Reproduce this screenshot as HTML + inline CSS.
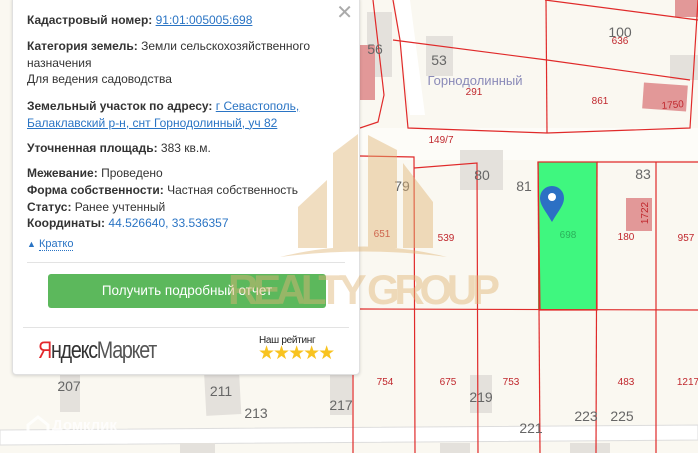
<!DOCTYPE html>
<html><head><meta charset="utf-8"><style>
*{margin:0;padding:0;box-sizing:border-box}
body{width:698px;height:453px;overflow:hidden;position:relative;background:#f8f6ef;font-family:"Liberation Sans","DejaVu Sans",sans-serif}
svg.map{position:absolute;left:0;top:0}
.pop{position:absolute;left:12px;top:-4px;width:348px;height:379px;background:#fff;border:1px solid #e0e0e0;border-radius:4px;box-shadow:0 1px 3px rgba(0,0,0,.15);font-size:12px;color:#333}
.pop p{position:absolute;left:14px;line-height:16.5px;white-space:nowrap}
.pop b{font-weight:bold;color:#333}
.pop a{color:#2a74c4;text-decoration:underline}
.x{position:absolute;right:6px;top:6px;font-size:20px;color:#aaa;line-height:20px}
.btn{position:absolute;left:35px;top:277px;width:278px;height:34px;background:#5cb85c;border-radius:3px;color:#fff;font-size:13.5px;text-align:center;line-height:34px}
.hr{position:absolute;height:1px;background:#e3e3e3}
.wm{position:absolute;pointer-events:none}
</style></head><body>
<svg class="map" width="698" height="453" viewBox="0 0 698 453">
<rect width="698" height="453" fill="#faf8f1"/>
<path d="M360 128 L698 128 L698 160 L360 160Z" fill="#fdfcf8"/>
<path d="M0 430 L698 425 L698 440 L0 445Z" fill="#fff" stroke="#ddd"/>
<path d="M395 0 L410 0 L425 115 L410 115Z" fill="#fff"/>
<g fill="#e4e1dc">
<rect x="367" y="12" width="25" height="65"/><rect x="426" y="36" width="27" height="40"/>
<rect x="460" y="150" width="43" height="40"/><rect x="670" y="55" width="28" height="25"/>
<rect x="205" y="365" width="35" height="50" transform="rotate(-3 222 390)"/>
<rect x="60" y="370" width="20" height="42"/><rect x="330" y="365" width="22" height="50"/>
<rect x="470" y="375" width="22" height="38"/><rect x="180" y="443" width="35" height="10"/>
<rect x="440" y="443" width="30" height="10"/><rect x="570" y="443" width="40" height="10"/>
</g>
<g fill="#e29898">
<rect x="360" y="45" width="15" height="55"/><rect x="643" y="84" width="44" height="26" transform="rotate(4 665 97)"/>
<rect x="626" y="198" width="26" height="33"/><rect x="675" y="0" width="23" height="17"/>
</g>
<rect x="538" y="162" width="59" height="148" fill="#3ff77f"/>
<g stroke="#e02a2a" stroke-width="1.2" fill="none">
<path d="M360 128 L378 122 L384 95 L373 0"/>
<path d="M393 0 L400 40 L408 128 L547 133 L690 128 L698 0"/>
<path d="M393 40 L547 60 L690 80"/>
<path d="M546 0 L547 133"/><path d="M545 0 L698 20"/>
<path d="M360 156 L414 157 L415 453"/>
<path d="M414 168 L477 163 L478 453"/>
<path d="M538 162 L540 453"/><path d="M597 162 L596 453"/>
<path d="M597 162 L698 162"/><path d="M656 162 L656 453"/>
<path d="M360 309 L698 310"/>
<path d="M538 162 L597 162 L597 310 L540 310Z"/>
<path d="M353 350 L353 453"/>
</g>
<g font-family="Liberation Sans,sans-serif" font-size="10" fill="#c0272d" text-anchor="middle">
<text x="620" y="44">636</text><text x="474" y="95">291</text><text x="600" y="104">861</text>
<text x="441" y="143">149/7</text><text x="382" y="237">651</text><text x="446" y="241">539</text>
<text x="626" y="240">180</text><text x="686" y="241">957</text><text x="385" y="385">754</text>
<text x="448" y="385">675</text><text x="511" y="385">753</text><text x="626" y="385">483</text>
<text x="688" y="385">1217</text><text x="673" y="108" transform="rotate(-5 673 108)">1750</text>
<text x="648" y="213" transform="rotate(-90 648 213)">1722</text>
</g>
<g font-family="Liberation Sans,sans-serif" font-size="14" fill="#666" text-anchor="middle">
<text x="620" y="37">100</text><text x="375" y="54">56</text><text x="439" y="65">53</text>
<text x="402" y="191">79</text><text x="482" y="180">80</text><text x="524" y="191">81</text>
<text x="643" y="179">83</text><text x="69" y="391">207</text><text x="221" y="396">211</text>
<text x="256" y="418">213</text><text x="341" y="410">217</text><text x="481" y="402">219</text>
<text x="586" y="421">223</text><text x="622" y="421">225</text><text x="531" y="433">221</text>
</g>
<text x="475" y="85" font-family="Liberation Sans,sans-serif" font-size="13" fill="#8a8ab8" text-anchor="middle">Горнодолинный</text>
<text x="568" y="238" font-family="Liberation Sans,sans-serif" font-size="10" fill="#2bb05a" text-anchor="middle">698</text>
<path d="M552 222 C545 210 540 205 540 198 A12 12 0 0 1 564 198 C564 205 559 210 552 222Z" fill="#2c70c4"/>
<circle cx="552" cy="197" r="4" fill="#fff"/>
<text x="52" y="430" font-family="Liberation Sans,sans-serif" font-size="15" font-weight="bold" fill="#fff" opacity=".8">Домклик</text>
<path d="M28 425 L38 417 L48 425 L48 435 L28 435Z" fill="none" stroke="#fff" stroke-width="3" opacity=".8"/>
</svg>
<div class="pop">
<div class="x">✕</div>
<p style="top:15px"><b>Кадастровый номер:</b> <a>91:01:005005:698</a></p>
<p style="top:41px"><b>Категория земель:</b> Земли сельскохозяйственного<br>назначения<br>Для ведения садоводства</p>
<p style="top:101px"><b>Земельный участок по адресу:</b> <a>г Севастополь,</a><br><a>Балаклавский р-н, снт Горнодолинный, уч 82</a></p>
<p style="top:143px"><b>Уточненная площадь:</b> 383 кв.м.</p>
<p style="top:168px;line-height:16.8px"><b>Межевание:</b> Проведено<br><b>Форма собственности:</b> Частная собственность<br><b>Статус:</b> Ранее учтенный<br><b>Координаты:</b> <span style="color:#2a74c4">44.526640, 33.536357</span></p>
<p style="top:239px;font-size:11px;color:#2a74c4"><span style="font-size:9px">▲</span> <span style="border-bottom:1px dotted #2a74c4">Кратко</span></p>
<div class="hr" style="left:14px;right:14px;top:265px"></div>
<div class="btn">Получить подробный отчет</div>
<div class="hr" style="left:10px;right:10px;top:330px"></div>
<div style="position:absolute;left:25px;top:340px;font-size:24px;letter-spacing:-1.5px;transform:scaleX(.82);transform-origin:left;color:#333;white-space:nowrap"><span style="color:#e3262b">Я</span>ндекс<span style="color:#555;font-weight:normal">Маркет</span></div>
<div style="position:absolute;left:246px;top:338px;font-size:10px;color:#222;letter-spacing:-.3px">Наш рейтинг</div>
<div style="position:absolute;left:245px;top:345px;font-size:19px;color:#f8c320;letter-spacing:-2px">★★★★★</div>
</div>
<svg class="wm" width="698" height="453" style="left:0;top:0">
<g fill="#e0b475" opacity=".45">
<path d="M298 207 L327 180 L327 248 L298 248Z"/>
<path d="M333 153 L358 134 L358 248 L333 248Z"/>
<path d="M368 135 L397 150 L397 248 L368 248Z"/>
<path d="M403 163 L433 202 L433 248 L403 248Z"/>
<path d="M280 257 Q364 236 447 257 Q364 246 280 257Z"/>
<text x="228" y="304" font-family="Liberation Sans,sans-serif" font-size="42" font-weight="bold" textLength="272">REALTY GROUP</text>
</g>
</svg>
</body></html>
